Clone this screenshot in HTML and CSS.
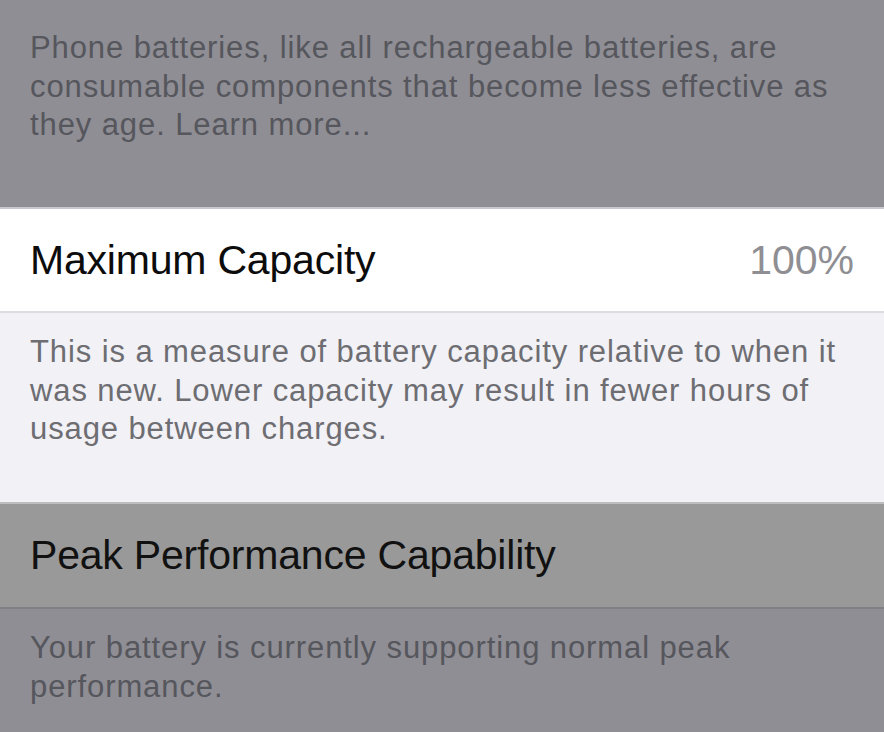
FILE: index.html
```html
<!DOCTYPE html>
<html>
<head>
<meta charset="utf-8">
<link rel="stylesheet" href="styles.css">
</head>
<body>
<div class="page">
  <div class="footer top">
    <p>Phone batteries, like all rechargeable batteries, are consumable components that become less effective as they age. Learn more...</p>
  </div>
  <div class="row white">
    <span class="title">Maximum Capacity</span>
    <span class="value">100%</span>
  </div>
  <div class="footer light">
    <p>This is a measure of battery capacity relative to when it was new. Lower capacity may result in fewer hours of usage between charges.</p>
  </div>
  <div class="row dimrow">
    <span class="title">Peak Performance Capability</span>
  </div>
  <div class="footer bottom">
    <p>Your battery is currently supporting normal peak performance.</p>
  </div>
</div>
</body>
</html>
```

FILE: styles.css
```css
html, body {
  margin: 0;
  padding: 0;
  background: #8f8e94;
}
.page {
  width: 884px;
  height: 732px;
  overflow: hidden;
  font-family: "Liberation Sans", Arial, sans-serif;
  display: flex;
  flex-direction: column;
}
.footer {
  box-sizing: border-box;
  flex-shrink: 0;
}
.footer p {
  margin: 0;
  font-size: 31px;
  line-height: 38.5px;
  letter-spacing: 0.9px;
  padding-right: 18px;
}
.top {
  height: 209px;
  padding: 29px 30px 0 30px;
  background: #8f8e94;
  color: #56565d;
  border-bottom: 2px solid #c9c8ce;
}
.row {
  box-sizing: border-box;
  flex-shrink: 0;
  display: flex;
  align-items: center;
  justify-content: space-between;
  padding: 0 30px;
  font-size: 41px;
}
.white {
  height: 104px;
  background: #ffffff;
  color: #0c0c0c;
  border-bottom: 2px solid #dcdce0;
}
.value {
  color: #8e8e93;
}
.light {
  height: 191px;
  padding: 20px 30px 0 30px;
  background: #f1f1f6;
  color: #6d6d72;
  border-bottom: 2px solid #bdbdc0;
}
.dimrow {
  height: 105px;
  background: #999999;
  color: #111111;
  border-bottom: 2px solid #7f7f84;
}
.title {
  letter-spacing: -0.2px;
}
.bottom {
  flex: 1;
  padding: 20px 30px 0 30px;
  background: #8f8e94;
  color: #56565d;
}
```
